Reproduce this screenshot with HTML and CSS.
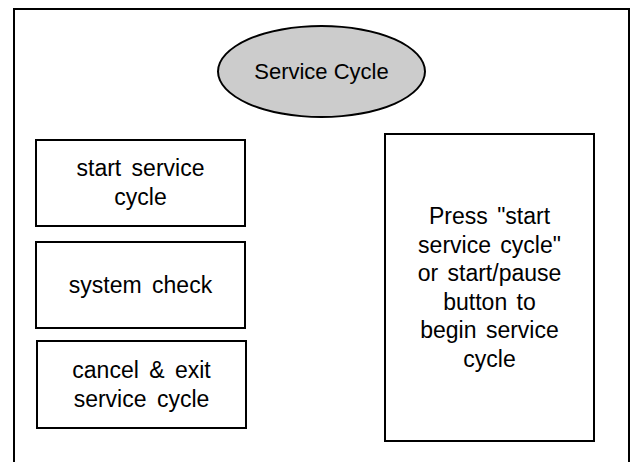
FILE: index.html
```html
<!DOCTYPE html>
<html lang="en">
<head>
  <meta charset="UTF-8" />
  <meta name="viewport" content="width=device-width, initial-scale=1.0" />
  <title>Service Cycle</title>
  <link rel="stylesheet" href="styles.css">
</head>
<body>
  <div class="screen">
    <div class="title-oval">Service Cycle</div>

    <div class="content">
      <div class="menu">
        <div class="menu-btn">start service cycle</div>
        <div class="menu-btn second">system check</div>
        <div class="menu-btn third">cancel &amp; exit service cycle</div>
      </div>

      <div class="message">
        Press "start service cycle" or start/pause button to begin service cycle
      </div>
    </div>
  </div>
</body>
</html>
```

FILE: styles.css
```css
html, body {
  margin: 0;
  padding: 0;
  background: #fff;
  overflow: hidden;
  font-family: "Liberation Sans", Arial, sans-serif;
  color: #000;
}
.screen {
  box-sizing: border-box;
  width: 617px;
  height: 454px;
  margin: 8px 0 0 13px;
  border: 2px solid #000;
  border-bottom: none;
}
.title-oval {
  box-sizing: border-box;
  width: 209px;
  height: 93px;
  margin: 15px auto 0;
  border: 2px solid #000;
  border-radius: 50%;
  background: #cccccc;
  display: flex;
  align-items: center;
  justify-content: center;
  font-size: 22px;
}
.content {
  display: flex;
  align-items: flex-start;
  padding-left: 20px;
}
.menu {
  display: flex;
  flex-direction: column;
  margin-top: 21px;
}
.menu-btn {
  box-sizing: border-box;
  width: 211px;
  height: 88px;
  padding: 0 14px;
  border: 2px solid #000;
  display: flex;
  align-items: center;
  justify-content: center;
  text-align: center;
  font-size: 23px;
  line-height: 29px;
  word-spacing: 4px;
}
.menu-btn.second {
  margin-top: 14px;
}
.menu-btn.third {
  margin-top: 11px;
  margin-left: 1px;
  height: 89px;
}
.message {
  box-sizing: border-box;
  width: 211px;
  height: 309px;
  margin: 15px 0 0 137px;
  padding: 0 26px;
  border: 2px solid #000;
  display: flex;
  align-items: center;
  justify-content: center;
  text-align: center;
  font-size: 23px;
  line-height: 28.5px;
  word-spacing: 3px;
}
```
